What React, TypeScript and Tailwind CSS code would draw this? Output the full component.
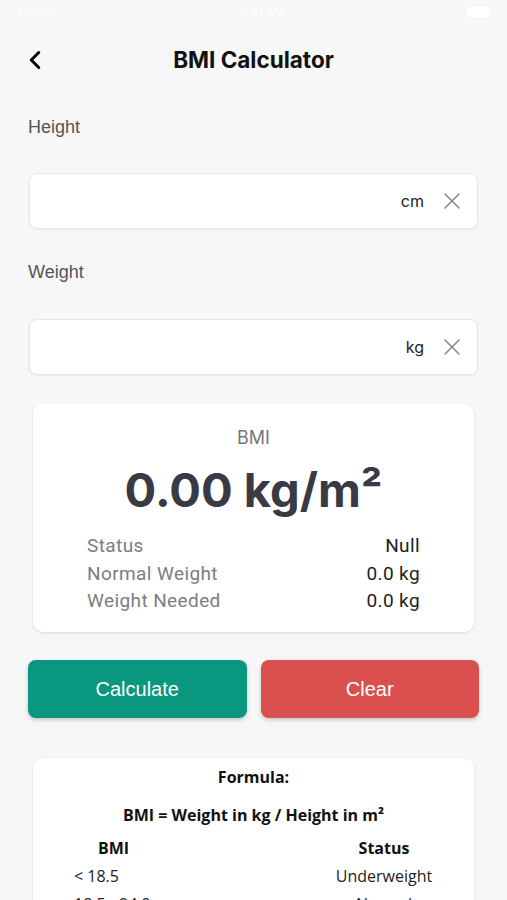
import { ChevronLeft, X } from "lucide-react";

const rows = [
  { label: "Status", value: "Null" },
  { label: "Normal Weight", value: "0.0 kg" },
  { label: "Weight Needed", value: "0.0 kg" },
];

const ranges = [
  { bmi: "< 18.5", status: "Underweight" },
  { bmi: "18.5 - 24.9", status: "Normal" },
  { bmi: "25 - 29.9", status: "Overweight" },
  { bmi: "> 30", status: "Obese" },
];

function UnitInput({ unit }: { unit: string }) {
  return (
    <div className="mx-[29px] flex h-[56px] items-center justify-end rounded-[8px] border border-[#e6e6e6] bg-white pr-[11px] shadow-[0_1px_2px_rgba(0,0,0,0.05)]">
      <span className="text-[16px] text-[#222]">{unit}</span>
      <X className="ml-[14px] h-[28px] w-[28px] text-[#8a8a8a]" strokeWidth={1.3} />
    </div>
  );
}

export default function App() {
  return (
    <div className="min-h-[900px] w-full overflow-hidden bg-[#f7f7f7] font-['Inter',sans-serif]">
      {/* status bar, white on white in the capture */}
      <div className="flex h-[24px] items-center justify-between px-[18px] text-[12px] text-white">
        <span>Carrier</span>
        <span>9:41 AM</span>
        <span className="h-[10px] w-[22px] rounded-[2px] bg-white" />
      </div>

      <header className="relative flex h-[72px] items-center justify-center">
        <ChevronLeft className="absolute left-[20px] h-[30px] w-[30px] text-black" strokeWidth={2.4} />
        <h1 className="text-[22.5px] font-bold text-[#111]">BMI Calculator</h1>
      </header>

      <div className="mt-[19px] px-[28px] font-['Liberation_Sans',sans-serif] text-[18px] leading-[24px] text-[#555]">
        Height
      </div>
      <div className="mt-[34px]">
        <UnitInput unit="cm" />
      </div>

      <div className="mt-[31px] px-[28px] font-['Liberation_Sans',sans-serif] text-[18px] leading-[24px] text-[#555]">
        Weight
      </div>
      <div className="mt-[35px]">
        <UnitInput unit="kg" />
      </div>

      <section className="mx-[33px] mt-[29px] flex h-[228px] flex-col items-center rounded-[10px] bg-white pt-[23px] shadow-[0_1px_3px_rgba(0,0,0,0.12)]">
        <div className="text-[18px] leading-[22px] text-[#777]">BMI</div>
        <div className="mt-[12px] text-[47px] font-bold leading-[58px] text-[#3a3a44]">
          0.00 kg/m²
        </div>
        <div className="mt-[13px] flex w-full flex-col px-[54px] font-['Roboto',sans-serif] text-[19px] leading-[27.5px] tracking-[0.4px]">
          {rows.map((r) => (
            <div key={r.label} className="flex justify-between">
              <span className="text-[#7d7d7d]">{r.label}</span>
              <span className="text-[#222]">{r.value}</span>
            </div>
          ))}
        </div>
      </section>

      <div className="mx-[28px] mt-[28px] flex gap-[14px] font-['Liberation_Sans',sans-serif]">
        <button className="flex h-[58px] flex-1 items-center justify-center rounded-[8px] bg-[#0a977f] text-[20px] text-white shadow-[0_2px_4px_rgba(0,0,0,0.2)]">
          Calculate
        </button>
        <button className="flex h-[58px] flex-1 items-center justify-center rounded-[8px] bg-[#d9504f] text-[20px] text-white shadow-[0_2px_4px_rgba(0,0,0,0.2)]">
          Clear
        </button>
      </div>

      <section className="mx-[33px] mt-[40px] rounded-[10px] bg-white pb-[20px] pt-[8px] font-['Open_Sans',sans-serif] text-[#111] shadow-[0_1px_3px_rgba(0,0,0,0.12)]">
        <div className="text-center text-[16px] font-bold leading-[22px]">Formula:</div>
        <div className="mt-[16px] text-center text-[16px] font-bold leading-[22px]">
          BMI = Weight in kg / Height in m²
        </div>
        <div className="mt-[8px] grid grid-cols-[1fr_1fr] text-[16px] leading-[28px]">
          <div className="pl-[65px] font-bold">BMI</div>
          <div className="pr-[40px] text-right font-bold">
            <span className="inline-block w-[100px] text-center">Status</span>
          </div>
          {ranges.map((r) => (
            <div key={r.bmi} className="contents">
              <div className="pl-[41px] text-[#222]">{r.bmi}</div>
              <div className="pr-[40px] text-right text-[#222]">
                <span className="inline-block w-[100px] text-center">{r.status}</span>
              </div>
            </div>
          ))}
        </div>
      </section>
    </div>
  );
}
